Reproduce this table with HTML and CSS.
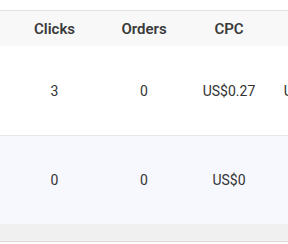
FILE: index.html
```html
<!DOCTYPE html>
<html lang="en">
<head>
  <meta charset="UTF-8" />
  <title>Ads report</title>
  <link rel="stylesheet" href="styles.css">
</head>
<body>
  <div class="report">
    <div class="row head">
      <div class="cell c1">Clicks</div>
      <div class="cell c2">Orders</div>
      <div class="cell c3">CPC</div>
      <div class="cell c4"></div>
    </div>
    <div class="row">
      <div class="cell c1">3</div>
      <div class="cell c2">0</div>
      <div class="cell c3">US$0.27</div>
      <div class="cell c4">US$0.81</div>
    </div>
    <div class="row alt">
      <div class="cell c1">0</div>
      <div class="cell c2">0</div>
      <div class="cell c3">US$0</div>
      <div class="cell c4"></div>
    </div>
    <div class="scrollbar"></div>
  </div>
</body>
</html>
```

FILE: styles.css
```css
body {
  margin: 0;
  font-family: Roboto, "Liberation Sans", sans-serif;
  background: #fff;
  overflow: hidden;
}
.report {
  margin-top: 10px;
  border-top: 1px solid #e4e4e4;
  width: 420px;
}
.row {
  display: flex;
  height: 89px;
  align-items: center;
  border-bottom: 1px solid #e8e8e8;
  font-size: 14px;
  color: #333;
}
.row.head {
  height: 35px;
  background: #f8f8f8;
  font-weight: 600;
  font-size: 15px;
  color: #3a3a3a;
  border-bottom: none;
}
.row.alt {
  height: 88px;
  background: #f7f8fd;
  border-bottom: none;
}
.cell {
  text-align: center;
  white-space: nowrap;
}
.c1 { width: 109px; }
.c2 { width: 70px; }
.c3 { width: 100px; }
.c4 { width: 62px; }
.scrollbar {
  height: 17px;
  background: #f0f0f0;
  border-bottom: 1px solid #dcdcdc;
}
```
